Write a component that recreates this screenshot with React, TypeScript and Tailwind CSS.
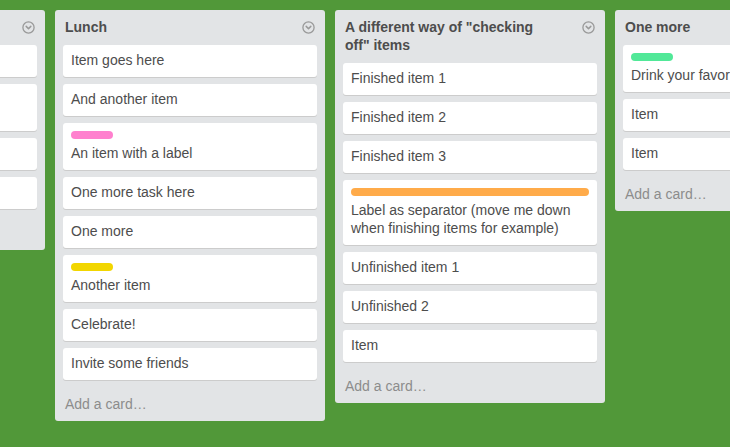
import React from "react";

type Card = { text: string; label?: string; fullLabel?: boolean };
type List = { title: string; cards: Card[] };

const lists: List[] = [
  {
    title: "To Do",
    cards: [
      { text: "Something" },
      { text: "Labelled", label: "bg-[#61bd4f]" },
      { text: "Another" },
      { text: "Last one" },
    ],
  },
  {
    title: "Lunch",
    cards: [
      { text: "Item goes here" },
      { text: "And another item" },
      { text: "An item with a label", label: "bg-[#ff80ce]" },
      { text: "One more task here" },
      { text: "One more" },
      { text: "Another item", label: "bg-[#f2d600]" },
      { text: "Celebrate!" },
      { text: "Invite some friends" },
    ],
  },
  {
    title: 'A different way of "checking off" items',
    cards: [
      { text: "Finished item 1" },
      { text: "Finished item 2" },
      { text: "Finished item 3" },
      {
        text: "Label as separator (move me down when finishing items for example)",
        label: "bg-[#ffab4a]",
        fullLabel: true,
      },
      { text: "Unfinished item 1" },
      { text: "Unfinished 2" },
      { text: "Item" },
    ],
  },
  {
    title: "One more",
    cards: [
      { text: "Drink your favorite drink", label: "bg-[#51e898]" },
      { text: "Item" },
      { text: "Item" },
    ],
  },
];

function MenuIcon() {
  return (
    <svg width="13" height="13" viewBox="0 0 13 13" className="mt-[3px] shrink-0">
      <circle cx="6.5" cy="6.5" r="5.6" fill="none" stroke="#999" strokeWidth="1.3" />
      <path d="M4.2 5.4 L6.5 7.7 L8.8 5.4" fill="none" stroke="#999" strokeWidth="1.5" strokeLinecap="round" strokeLinejoin="round" />
    </svg>
  );
}

function CardView({ card }: { card: Card }) {
  return (
    <div className="mb-[7px] rounded-[3px] bg-white px-2 pt-1.5 pb-2 text-[14px] leading-[18px] text-[#4d4d4d] shadow-[0_1px_0_#cccccc]">
      {card.label && (
        <div className={`${card.label} ${card.fullLabel ? "w-full" : "w-[42px]"} mt-[2px] mb-[5px] h-2 rounded-[4px]`} />
      )}
      <div>{card.text}</div>
    </div>
  );
}

function ListView({ list }: { list: List }) {
  return (
    <div className="w-[270px] shrink-0 rounded-[3px] bg-[#e2e4e6]">
      <div className="flex items-start justify-between pt-2 pb-[9px] pl-[10px] pr-[10px]">
        <h2 className="w-[215px] text-[14px] font-bold leading-[18px] text-[#4d4d4d]">{list.title}</h2>
        <MenuIcon />
      </div>
      <div className="px-2">
        {list.cards.map((c, i) => (
          <CardView key={i} card={c} />
        ))}
      </div>
      <div className="px-[10px] pt-2 pb-2 text-[14px] leading-[18px] text-[#8c8c8c]">Add a card…</div>
    </div>
  );
}

export default function App() {
  return (
    <div className="h-screen w-screen overflow-hidden bg-[#519839] font-['Liberation_Sans',Arial,sans-serif]">
      <div className="ml-[-225px] flex items-start gap-[10px] pt-[10px]">
        {lists.map((l, i) => (
          <ListView key={i} list={l} />
        ))}
      </div>
    </div>
  );
}
